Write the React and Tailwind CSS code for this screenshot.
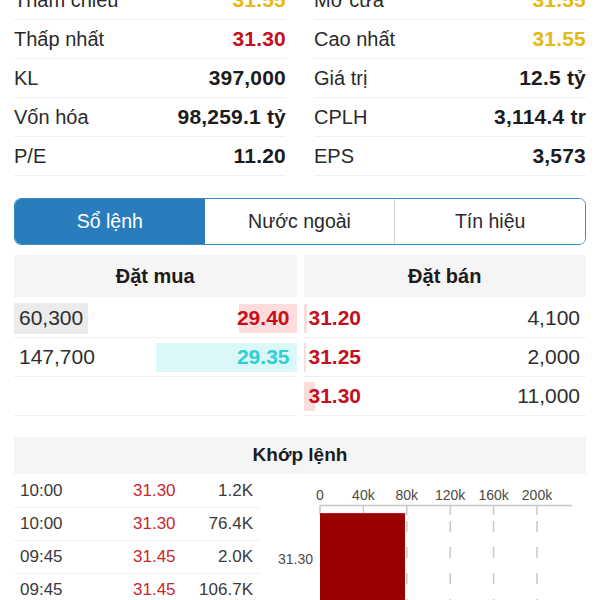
import React from 'react'

const FONT = { fontFamily: '"Liberation Sans", Arial, sans-serif' }

const STATS = [
  [
    { label: 'Tham chiếu', value: '31.55', tone: 'text-[#e6b814]' },
    { label: 'Thấp nhất', value: '31.30', tone: 'text-[#c4101c]' },
    { label: 'KL', value: '397,000', tone: 'text-[#1c1c1e]' },
    { label: 'Vốn hóa', value: '98,259.1 tỷ', tone: 'text-[#1c1c1e]' },
    { label: 'P/E', value: '11.20', tone: 'text-[#1c1c1e]' },
  ],
  [
    { label: 'Mở cửa', value: '31.55', tone: 'text-[#e6b814]' },
    { label: 'Cao nhất', value: '31.55', tone: 'text-[#e6b814]' },
    { label: 'Giá trị', value: '12.5 tỷ', tone: 'text-[#1c1c1e]' },
    { label: 'CPLH', value: '3,114.4 tr', tone: 'text-[#1c1c1e]' },
    { label: 'EPS', value: '3,573', tone: 'text-[#1c1c1e]' },
  ],
]

const BIDS = [
  { vol: '60,300', price: '29.40', bar: 58, tone: 'text-[#c4101c]', barBg: 'bg-[#fddcdc]', volBg: true },
  { vol: '147,700', price: '29.35', bar: 141, tone: 'text-[#2fd0d3]', barBg: 'bg-[#dcf7f7]', volBg: false },
  null,
]

const ASKS = [
  { price: '31.20', vol: '4,100', bar: 3 },
  { price: '31.25', vol: '2,000', bar: 2 },
  { price: '31.30', vol: '11,000', bar: 11 },
]

const TRADES = [
  ['10:00', '31.30', '1.2K'],
  ['10:00', '31.30', '76.4K'],
  ['09:45', '31.45', '2.0K'],
  ['09:45', '31.45', '106.7K'],
]

function StatColumn({ items }) {
  return (
    <div>
      {items.map(item => (
        <div key={item.label} className="h-[39px] flex items-center justify-between border-b border-[#efefef]">
          <span className="text-[20px] text-[#2a2a2a]">{item.label}</span>
          <span className={`text-[21px] font-bold tracking-[0.2px] ${item.tone}`}>{item.value}</span>
        </div>
      ))}
    </div>
  )
}

function Tabs() {
  const tabs = ['Sổ lệnh', 'Nước ngoài', 'Tín hiệu']
  return (
    <div className="mt-[22px] mx-[14px] h-[47px] flex rounded-[7px] border-[1.5px] border-[#3b8cc6] overflow-hidden">
      {tabs.map((tab, i) => (
        <div
          key={tab}
          className={`flex-1 flex items-center justify-center text-[19.5px] ${
            i === 0 ? 'bg-[#2a7dbd] text-white' : 'bg-white text-[#2a2a2a]'
          } ${i === 2 ? 'border-l border-[#cfd8de]' : ''}`}
        >
          {tab}
        </div>
      ))}
    </div>
  )
}

function OrderBook() {
  return (
    <div className="mt-[10px] mx-[14px] grid grid-cols-2 gap-x-[7px]">
      <div>
        <div className="h-[42px] bg-[#f5f5f5] flex items-center justify-center text-[20px] font-bold text-[#1c1c1e]">
          Đặt mua
        </div>
        <div className="mt-[2px]">
          {BIDS.map((row, i) => (
            <div key={i} className="relative h-[39px] flex items-center justify-between border-b border-[#efefef]">
              {row && (
                <>
                  <div className={`absolute right-0 top-[5px] bottom-[4px] ${row.barBg}`} style={{ width: row.bar }} />
                  <span
                    className={`relative h-[31px] flex items-center text-[21px] text-[#2e2e2e] px-[5px] ${
                      row.volBg ? 'bg-[#ebebeb]' : ''
                    }`}
                  >
                    {row.vol}
                  </span>
                  <span className={`relative text-[21px] font-bold pr-[7px] ${row.tone}`}>{row.price}</span>
                </>
              )}
            </div>
          ))}
        </div>
      </div>
      <div>
        <div className="h-[42px] bg-[#f5f5f5] flex items-center justify-center text-[20px] font-bold text-[#1c1c1e]">
          Đặt bán
        </div>
        <div className="mt-[2px]">
          {ASKS.map(row => (
            <div key={row.price} className="relative h-[39px] flex items-center justify-between border-b border-[#efefef]">
              <div className="absolute left-0 top-[5px] bottom-[4px] bg-[#fddcdc]" style={{ width: row.bar }} />
              <span className="relative text-[21px] font-bold text-[#c4101c] pl-[5px]">{row.price}</span>
              <span className="relative text-[21px] text-[#2e2e2e] pr-[6px]">{row.vol}</span>
            </div>
          ))}
        </div>
      </div>
    </div>
  )
}

function VolumeChart() {
  const ticks = [0, 40, 80, 120, 160, 200]
  const x0 = 60
  const step = 43.4
  return (
    <svg width="340" height="126" viewBox="0 0 340 126" className="block">
      {ticks.map((t, i) => (
        <text
          key={t}
          x={x0 + i * step}
          y="25"
          textAnchor="middle"
          fontSize="14"
          fill="#4a4a4a"
          fontFamily='"Liberation Sans", Arial, sans-serif'
        >
          {t === 0 ? '0' : `${t}k`}
        </text>
      ))}
      <line x1={x0} y1="30.5" x2="312" y2="30.5" stroke="#c8c8c8" strokeWidth="1.5" />
      {ticks.map((t, i) => (
        <line key={`t${t}`} x1={x0 + i * step} y1="30" x2={x0 + i * step} y2="40" stroke="#c8c8c8" strokeWidth="1.5" />
      ))}
      {ticks.slice(2).map((t, i) => (
        <line
          key={`g${t}`}
          x1={x0 + (i + 2) * step}
          y1="42"
          x2={x0 + (i + 2) * step}
          y2="126"
          stroke="#c8c8c8"
          strokeWidth="1.5"
          strokeDasharray="11 15"
          strokeDashoffset="-4"
        />
      ))}
      <rect x={x0} y="38" width="85" height="88" fill="#990000" />
      <line x1={x0} y1="38.5" x2={x0 + 85} y2="38.5" stroke="#c81818" strokeWidth="1" />
      <text x="53" y="89" textAnchor="end" fontSize="14" fill="#4a4a4a" fontFamily='"Liberation Sans", Arial, sans-serif'>
        31.30
      </text>
    </svg>
  )
}

function Matches() {
  return (
    <div className="mt-[21px]">
      <div className="mx-[14px] h-[37px] bg-[#f5f5f5] flex items-center justify-center text-[19px] font-bold text-[#1c1c1e]">
        Khớp lệnh
      </div>
      <div className="flex pt-[1px]">
        <div className="ml-[14px] w-[246px]">
          {TRADES.map((row, i) => (
            <div key={i} className="h-[33px] grid grid-cols-[119px_52px_1fr] items-center border-b border-[#efefef] text-[17px]">
              <span className="pl-[6px] text-[#3a3a3a]">{row[0]}</span>
              <span className="text-[#c9272d]">{row[1]}</span>
              <span className="text-right pr-[7px] text-[#3a3a3a]">{row[2]}</span>
            </div>
          ))}
        </div>
        <VolumeChart />
      </div>
    </div>
  )
}

export default function App() {
  return (
    <div className="w-[600px] h-[600px] overflow-hidden bg-white" style={FONT}>
      <div className="-mt-[19px] px-[14px] grid grid-cols-2 gap-x-[28px]">
        <StatColumn items={STATS[0]} />
        <StatColumn items={STATS[1]} />
      </div>
      <Tabs />
      <OrderBook />
      <Matches />
    </div>
  )
}
